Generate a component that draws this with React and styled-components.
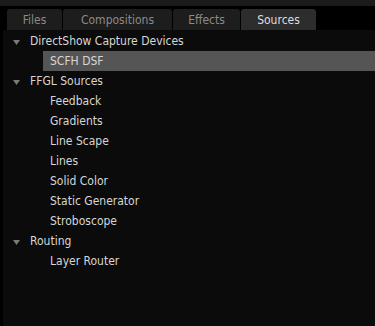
import React from 'react'
import styled, { createGlobalStyle } from 'styled-components'

const GlobalStyle = createGlobalStyle`
  html, body {
    margin: 0;
    padding: 0;
    background: #000;
  }
  body {
    font-family: "DejaVu Sans Condensed", "DejaVu Sans", "Liberation Sans", sans-serif;
    font-stretch: condensed;
    font-size: 12px;
  }
`

const Window = styled.div`
  width: 375px;
  height: 326px;
  display: flex;
  flex-direction: column;
  background: #000;
  overflow: hidden;
`

const TopStrip = styled.div`
  height: 6px;
  background: #1b1b1b;
`

const TabBar = styled.div`
  display: flex;
  gap: 1px;
  padding: 3px 0 0 7px;
  height: 21px;
`

const Tab = styled.div`
  width: ${p => p.width}px;
  height: 21px;
  display: flex;
  align-items: center;
  justify-content: center;
  border-radius: 3px 3px 0 0;
  background: ${p => (p.active ? '#2d2d2d' : '#1d1d1d')};
  color: ${p => (p.active ? '#dedede' : '#8a8a8a')};
  font-size: 12px;
`

const Panel = styled.div`
  flex: 1;
  margin-left: 3px;
  padding-top: 1px;
  background: #0b0b0b;
  display: flex;
  flex-direction: column;
`

const Row = styled.div`
  height: 20px;
  display: flex;
  align-items: center;
  color: #d6d6d6;
  font-size: 12px;
  padding-left: ${p => (p.child ? 47 : 10)}px;
`

const Item = styled.div`
  flex: 1;
  height: 20px;
  display: flex;
  align-items: center;
  margin-left: -7px;
  padding-left: 7px;
  background: ${p => (p.selected ? '#555555' : 'transparent')};
`

const Arrow = styled.svg`
  width: 7px;
  height: 5px;
  margin-right: 10px;
  margin-top: 3px;
`

const tabs = [
  { name: 'Files', width: 55 },
  { name: 'Compositions', width: 109 },
  { name: 'Effects', width: 67 },
  { name: 'Sources', width: 75, active: true }
]

const tree = [
  { name: 'DirectShow Capture Devices', items: ['SCFH DSF'], selected: 'SCFH DSF' },
  {
    name: 'FFGL Sources',
    items: ['Feedback', 'Gradients', 'Line Scape', 'Lines', 'Solid Color', 'Static Generator', 'Stroboscope']
  },
  { name: 'Routing', items: ['Layer Router'] }
]

const Group = ({ group }) => (
  <>
    <Row>
      <Arrow viewBox='0 0 7 5'>
        <polygon points='0,0 7,0 3.5,5' fill='#7a7a7a' />
      </Arrow>
      {group.name}
    </Row>
    {group.items.map(item => (
      <Row child key={item}>
        <Item selected={item === group.selected}>{item}</Item>
      </Row>
    ))}
  </>
)

const App = () => (
  <Window>
    <GlobalStyle />
    <TopStrip />
    <TabBar>
      {tabs.map(t => (
        <Tab key={t.name} width={t.width} active={t.active}>{t.name}</Tab>
      ))}
    </TabBar>
    <Panel>
      {tree.map(g => <Group key={g.name} group={g} />)}
    </Panel>
  </Window>
)

export default App
